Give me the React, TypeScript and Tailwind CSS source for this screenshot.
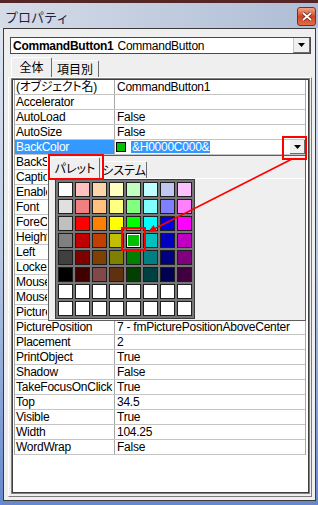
const rows: [string, string][] = [
  ['(オブジェクト名)', 'CommandButton1'],
  ['Accelerator', ''],
  ['AutoLoad', 'False'],
  ['AutoSize', 'False'],
  ['BackColor', '&H0000C000&'],
  ['BackStyle', ''],
  ['Caption', ''],
  ['Enabled', ''],
  ['Font', ''],
  ['ForeColor', ''],
  ['Height', ''],
  ['Left', ''],
  ['Locked', ''],
  ['MouseIcon', ''],
  ['MousePointer', ''],
  ['Picture', ''],
  ['PicturePosition', '7 - fmPicturePositionAboveCenter'],
  ['Placement', '2'],
  ['PrintObject', 'True'],
  ['Shadow', 'False'],
  ['TakeFocusOnClick', 'True'],
  ['Top', '34.5'],
  ['Visible', 'True'],
  ['Width', '104.25'],
  ['WordWrap', 'False'],
];

const palette: string[][] = [
  ['#fcfcfc', '#ffc0c0', '#fcd6a8', '#ffffc0', '#c0ffc0', '#c0ffff', '#c0c8f0', '#ffc0ff'],
  ['#e0e0e0', '#f08080', '#ffc080', '#ffff80', '#80ff80', '#80ffff', '#8080ff', '#ff80ff'],
  ['#c0c0c0', '#ff0000', '#ff8000', '#ffff00', '#00ff00', '#00ffff', '#0000e0', '#ff00ff'],
  ['#808080', '#c00000', '#c04000', '#c0c000', '#00c000', '#00c0c0', '#0000c0', '#c000c0'],
  ['#404040', '#800000', '#804000', '#808000', '#008000', '#008080', '#000080', '#800080'],
  ['#000000', '#400000', '#804848', '#603010', '#004000', '#004040', '#000050', '#400040'],
  ['#ffffff', '#ffffff', '#ffffff', '#ffffff', '#ffffff', '#ffffff', '#ffffff', '#ffffff'],
  ['#ffffff', '#ffffff', '#ffffff', '#ffffff', '#ffffff', '#ffffff', '#ffffff', '#ffffff'],
];

function DownArrow() {
  return (
    <svg width="7" height="4" viewBox="0 0 7 4">
      <path d="M0 0H7L3.5 4Z" fill="#000" />
    </svg>
  );
}

// rows 5..15 sit under the colour drop-down, only the left bit of the name shows
function PropRow({ name, value, covered }: { name: string; value: string; covered: boolean }) {
  if (name === 'BackColor') {
    return (
      <div className="flex h-[15px] border-b border-[#c4c4c4]">
        <div className="w-[100px] shrink-0 border-r border-[#a8a8a8] bg-[#3399ff] pl-[1px] leading-[14px] text-white">
          {name}
        </div>
        <div className="flex flex-1 items-center">
          <div className="ml-[1px] h-[10px] w-[10px] border border-black bg-[#00c000]" />
          <span className="ml-[5px] bg-[#3399ff] px-[1px] leading-[12px] text-white">{value}</span>
          <div className="flex-1" />
          <div className="flex h-[14px] w-[15px] items-center justify-center border-r border-b border-[#6a6a6a] bg-[#f0f0f0]">
            <DownArrow />
          </div>
        </div>
      </div>
    );
  }
  return (
    <div className="flex h-[15px] border-b border-[#c4c4c4]">
      <div className="w-[100px] shrink-0 overflow-hidden whitespace-nowrap border-r border-[#a8a8a8] pl-[1px] leading-[14px] [font-feature-settings:'palt']">
        {covered ? <div className="w-[31px] overflow-hidden">{name}</div> : name}
      </div>
      <div className="flex-1 overflow-hidden whitespace-nowrap pl-[2px] leading-[14px]">{value}</div>
    </div>
  );
}

export default function App() {
  return (
    <div className="relative h-[505px] w-[318px] overflow-hidden bg-gradient-to-b from-[#e2e8f1] via-[#b9c8e2] to-[#6689cb] font-['Liberation_Sans','Noto_Sans_CJK_JP',sans-serif] text-[12px] tracking-[-0.25px] text-black">
      <div className="h-[3px] bg-[#552626]" />

      {/* title bar */}
      <div className="flex h-[25px] items-start justify-between bg-gradient-to-r from-[#d5dce8] to-[#aebdd6]">
        <span className="ml-[5px] mt-[6px] text-[13px] leading-[15px] tracking-normal text-[#1e2040] [font-family:'Noto_Sans_CJK_JP',sans-serif]">
          プロパティ
        </span>
        <div className="mr-[2px] mt-[4px] flex h-[19px] w-[19px] items-center justify-center rounded-[3px] border border-[#7b2f20] bg-gradient-to-b from-[#f2a488] via-[#cf4424] to-[#e56a46]">
          <svg width="10" height="9" viewBox="0 0 10 9">
            <path d="M1 1L9 8M9 1L1 8" stroke="#5a1a10" strokeWidth="3.2" />
            <path d="M1 1L9 8M9 1L1 8" stroke="#fff" strokeWidth="1.8" />
          </svg>
        </div>
      </div>

      {/* window body */}
      <div className="ml-[3px] flex h-[473px] w-[313px] flex-col border border-[#3a3a3a] bg-[#f0efef]">
        {/* object combo */}
        <div className="ml-[6px] mt-[8px] flex h-[17px] w-[301px] items-center border border-[#4a4a4a] bg-white">
          <span className="pl-[2px] font-bold">CommandButton1</span>
          <span className="ml-[4px]">CommandButton</span>
          <div className="flex-1" />
          <div className="flex h-[15px] w-[17px] items-center justify-center border-l border-[#c8c8c8] border-r border-b border-r-[#6a6a6a] border-b-[#6a6a6a] bg-[#f0f0f0]">
            <DownArrow />
          </div>
        </div>

        {/* tabs */}
        <div className="mt-[3px] flex h-[20px] items-end pl-[7px] [font-family:'Noto_Sans_CJK_JP',sans-serif] tracking-normal">
          <div className="flex h-[20px] w-[41px] items-center justify-center rounded-t-[2px] border-l border-t border-r border-l-white border-t-white border-r-[#6a6a6a] bg-[#f0efef] pb-[1px] leading-[14px]">
            全体
          </div>
          <div className="flex h-[17px] w-[47px] items-center justify-center rounded-t-[2px] border-t border-r border-t-white border-r-[#6a6a6a] bg-[#f0efef] leading-[14px]">
            項目別
          </div>
        </div>

        {/* tab page */}
        <div className="ml-[4px] h-[420px] w-[304px] border border-l-white border-t-white border-r-[#7a7a7a] border-b-[#7a7a7a] pl-[2px]">
          <div className="h-[416px] w-[299px] border border-[#7f7f7f]">
            <div className="h-full w-full border border-[#3f3f3f] bg-white pr-[1px]">
              <div className="ml-[1px] w-[292px] border-l border-r border-[#a8a8a8]">
                {rows.map(([n, v], i) => (
                  <PropRow key={n} name={n} value={v} covered={i >= 5 && i <= 15} />
                ))}
              </div>
            </div>
          </div>
        </div>
      </div>

      {/* colour drop-down */}
      <div className="absolute left-[48px] top-[155px] flex h-[166px] w-[258px] flex-col border border-[#5e5e5e] bg-[#f0efef]">
        <div className="flex h-[22px] items-end pl-[1px] [font-family:'Noto_Sans_CJK_JP',sans-serif] tracking-normal">
          <div className="flex h-[21px] w-[50px] items-center justify-center rounded-t-[2px] border-l border-t border-r border-l-white border-t-white border-r-[#6a6a6a] leading-[14px] [font-feature-settings:'palt']">
            パレット
          </div>
          <div className="ml-[1px] flex h-[17px] w-[46px] items-center justify-center rounded-t-[2px] border-l border-t border-r border-l-white border-t-white border-r-[#6a6a6a] leading-[14px] [font-feature-settings:'palt']">
            システム
          </div>
        </div>
        <div className="flex-1 border-t border-white pl-[6px]">
          <div className="grid w-fit grid-cols-8 gap-[2px] border border-[#3a3a3a] bg-[#767676] p-[2px]">
            {palette.flat().map((c, i) => (
              <div
                key={i}
                className={
                  i === 28
                    ? 'h-[15px] w-[15px] border border-black shadow-[inset_0_0_0_1px_#ffffff]'
                    : 'h-[15px] w-[15px] border border-[#1e1e1e]'
                }
                style={{ backgroundColor: c }}
              />
            ))}
          </div>
        </div>
      </div>

      {/* annotations */}
      <div className="absolute left-[282px] top-[136px] h-[24px] w-[25px] border-2 border-[#ff0000]" />
      <div className="absolute left-[48px] top-[154px] h-[26px] w-[56px] border-2 border-[#ff0000]" />
      <div className="absolute left-[121px] top-[227px] h-[24px] w-[25px] border-2 border-[#ff0000]" />
      <svg className="pointer-events-none absolute left-0 top-0" width="318" height="505">
        <line x1="292" y1="159" x2="154" y2="229" stroke="#ff0000" strokeWidth="1.6" />
        <path d="M148 232L157 231.6L153.6 225Z" fill="#ff0000" />
      </svg>
    </div>
  );
}
